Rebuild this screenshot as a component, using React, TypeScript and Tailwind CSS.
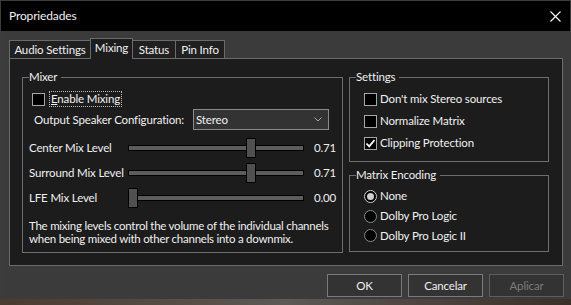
import type { ReactNode } from 'react';

const SLIDERS = [
  { label: 'Center Mix Level', value: 0.71 },
  { label: 'Surround Mix Level', value: 0.71 },
  { label: 'LFE Mix Level', value: 0 },
];

function CheckBox({ checked = false }: { checked?: boolean }) {
  return (
    <span className="w-[13px] h-[13px] shrink-0 border border-[#a6a6a6] bg-black flex items-center justify-center">
      {checked && (
        <svg width="11" height="11" viewBox="0 0 11 11">
          <path d="M1.5 5.5 L4.2 8.3 L9.5 2" fill="none" stroke="#ffffff" strokeWidth="1.8" />
        </svg>
      )}
    </span>
  );
}

function Radio({ checked = false }: { checked?: boolean }) {
  return (
    <span
      className={`w-[13px] h-[13px] shrink-0 rounded-full border bg-black flex items-center justify-center ${
        checked ? 'border-[#d0d0d0]' : 'border-[#8a8a8a]'
      }`}
    >
      {checked && <span className="w-[7px] h-[7px] rounded-full bg-[#cfcfcf]" />}
    </span>
  );
}

function Group({ title, className, children }: { title: string; className: string; children: ReactNode }) {
  return (
    <fieldset className={`min-w-0 shrink-0 border border-[#6e6e6e] ${className}`}>
      <legend className="ml-[6px] pr-[4px] leading-[16px]">{title}</legend>
      {children}
    </fieldset>
  );
}

function Slider({ label, value }: { label: string; value: number }) {
  return (
    <div className="flex items-center h-[20px] pl-[6px]">
      <span className="w-[99px] whitespace-nowrap">{label}</span>
      <div className="relative w-[176px] h-[20px] flex items-center">
        <div className="w-full h-[6px] bg-[#5c5c5c] border border-black" />
        <div
          className="absolute top-0 w-[10px] h-[20px] bg-[#505050] border border-black"
          style={{ left: `${value * 166}px` }}
        />
      </div>
      <span className="w-[32px] text-right">{value.toFixed(2)}</span>
    </div>
  );
}

function Button({ children, disabled = false }: { children: ReactNode; disabled?: boolean }) {
  return (
    <button
      type="button"
      className={`w-[75px] h-[23px] border bg-[#333333] ${
        disabled ? 'border-[#5e5e5e] text-[#7a7a7a]' : 'border-[#7b7b7b] text-[#f0f0f0]'
      }`}
    >
      {children}
    </button>
  );
}

export default function App() {
  return (
    <div className="w-[571px] h-[305px] flex flex-col bg-gradient-to-r from-[#4a3b30] via-[#5d5954] to-[#3b3029] font-['Lato',sans-serif] text-[11.5px] tracking-[-0.15px] text-[#f0f0f0]">
      <div className="h-[299px] flex flex-col border border-[#3c3c3c] bg-[#3b3b3b]">
        <div className="h-[30px] bg-black flex items-center justify-between pl-[8px] pr-[9px]">
          <span className="text-[12px]">Propriedades</span>
          <svg width="11" height="11" viewBox="0 0 11 11">
            <path d="M0.5 0.5 L10.5 10.5 M10.5 0.5 L0.5 10.5" stroke="#ffffff" strokeWidth="1.1" />
          </svg>
        </div>

        <div className="flex-1 flex flex-col pl-[8px] pr-[7px] pt-[7px]">
          <div className="relative z-10 flex items-end h-[21px] -mb-px whitespace-nowrap">
            <div className="w-[82px] h-[18px] mb-px border-t border-l border-r border-[#6b6b6b] bg-[#202020] flex items-center justify-center">
              Audio Settings
            </div>
            <div className="w-[43px] h-[21px] -ml-px border-t border-l border-r border-[#6b6b6b] bg-[#1c1c1c] flex items-center justify-center pb-[2px]">
              Mixing
            </div>
            <div className="w-[44px] h-[18px] mb-px -ml-px border-t border-l border-r border-[#6b6b6b] bg-[#202020] flex items-center justify-center">
              Status
            </div>
            <div className="w-[50px] h-[18px] mb-px -ml-px border-t border-l border-r border-[#6b6b6b] bg-[#202020] flex items-center justify-center">
              Pin Info
            </div>
          </div>

          <div className="h-[208px] border border-[#6b6b6b] bg-[#1c1c1c] flex gap-[6px] pl-[12px] pr-[13px] pt-[10px]">
            <Group title="Mixer" className="w-[321px] h-[184px]">
              <div className="flex items-center h-[16px] mt-[6px] pl-[9px]">
                <CheckBox />
                <span className="ml-[4px] px-px h-[16px] leading-[14px] border border-dotted border-[#bdbdbd]">
                  <span className="underline">E</span>nable Mixing
                </span>
              </div>
              <div className="flex items-center h-[21px] mt-[2px] pl-[11px]">
                <span className="w-[159px] whitespace-nowrap">Output Speaker Configuration:</span>
                <div className="w-[136px] h-[21px] border border-[#8a8a8a] bg-[#333333] flex items-center justify-between pl-[2px] pr-[6px]">
                  <span>Stereo</span>
                  <svg width="8" height="5" viewBox="0 0 8 5">
                    <path d="M0.5 0.5 L4 4 L7.5 0.5" fill="none" stroke="#a8a8a8" strokeWidth="1" />
                  </svg>
                </div>
              </div>
              <div className="flex flex-col gap-[5px] mt-[8px]">
                {SLIDERS.map((s) => (
                  <Slider key={s.label} label={s.label} value={s.value} />
                ))}
              </div>
              <p className="mt-[11px] pl-[6px] leading-[13px] whitespace-nowrap text-[11.5px] tracking-[-0.25px]">
                The mixing levels control the volume of the individual channels
                <br />
                when being mixed with other channels into a downmix.
              </p>
            </Group>

            <div className="flex flex-col">
              <Group title="Settings" className="w-[200px] h-[93px]">
                <div className="flex flex-col mt-[3px] pl-[14px]">
                  {[
                    ["Don't mix Stereo sources", false],
                    ['Normalize Matrix', false],
                    ['Clipping Protection', true],
                  ].map(([label, checked]) => (
                    <div key={label as string} className="flex items-center h-[22px] gap-[3px]">
                      <CheckBox checked={checked as boolean} />
                      <span>{label}</span>
                    </div>
                  ))}
                </div>
              </Group>
              <Group title="Matrix Encoding" className="w-[200px] h-[85px] mt-[5px]">
                <div className="flex flex-col mt-[3px] pl-[14px]">
                  <div className="flex items-center h-[20px] gap-[3px]">
                    <Radio checked />
                    <span>None</span>
                  </div>
                  <div className="flex items-center h-[20px] gap-[3px]">
                    <Radio />
                    <span>Dolby Pro Logic</span>
                  </div>
                  <div className="flex items-center h-[19px] gap-[3px]">
                    <Radio />
                    <span>Dolby Pro Logic II</span>
                  </div>
                </div>
              </Group>
            </div>
          </div>

          <div className="flex justify-end gap-[6px] mt-[8px] -mr-px">
            <Button>OK</Button>
            <Button>Cancelar</Button>
            <Button disabled>Aplicar</Button>
          </div>
        </div>
      </div>
    </div>
  );
}
